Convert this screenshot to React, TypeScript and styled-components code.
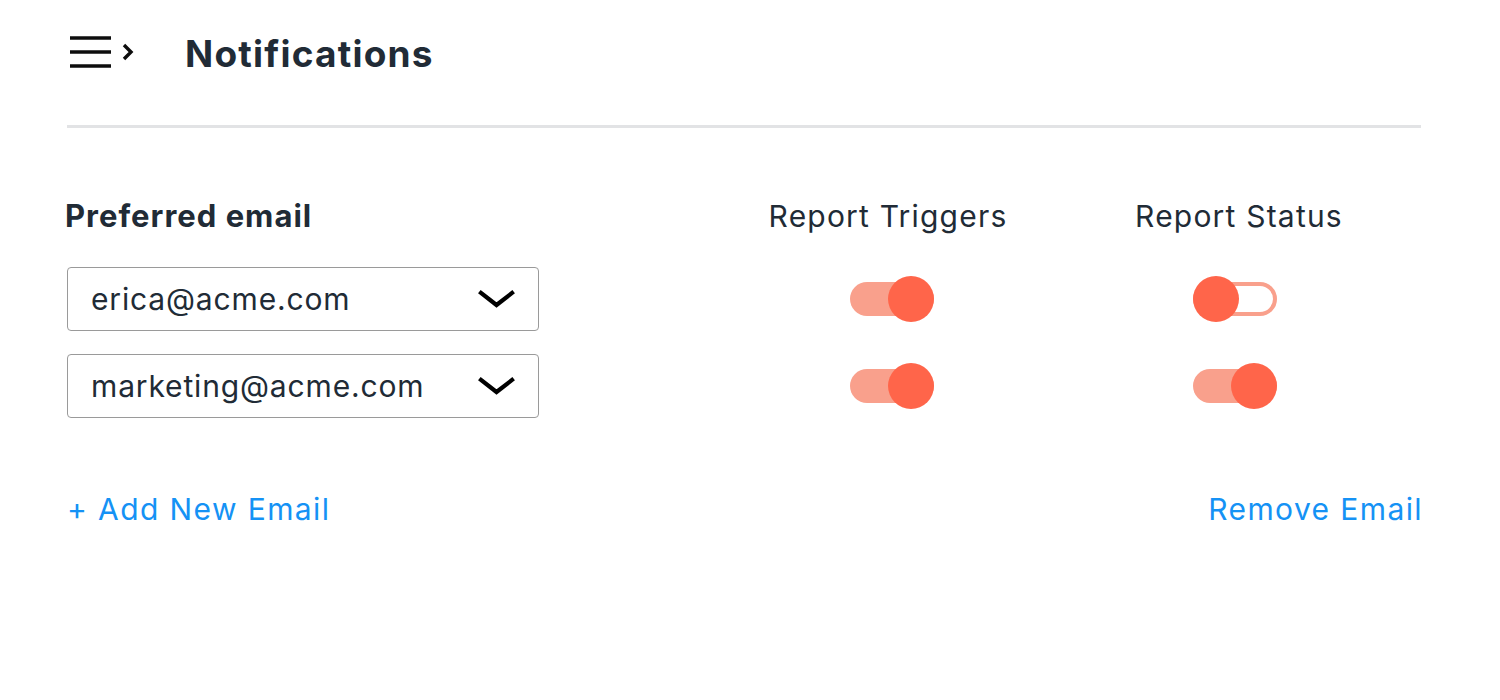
import React from "react";
import styled, { createGlobalStyle } from "styled-components";

const Global = createGlobalStyle`
  html, body { margin: 0; padding: 0; background: #fff; }
  body { font-family: Inter, "Noto Sans", sans-serif; color: #212b36; }
  * { box-sizing: border-box; }
`;

const Page = styled.div`
  width: 1500px;
  height: 700px;
  padding: 0 79px 0 67px;
`;

const Header = styled.header`
  display: flex;
  align-items: center;
  height: 128px;
  border-bottom: 3px solid #e2e3e5;
  padding-bottom: 18px;
`;

const MenuButton = styled.button`
  display: flex;
  align-items: center;
  border: 0;
  background: none;
  padding: 0;
  margin: 0 0 4px 3px;
  width: 66px;
  height: 40px;
  cursor: pointer;
`;

const Title = styled.h1`
  margin: 0 0 0 49px;
  font-size: 37px;
  font-weight: 700;
  letter-spacing: 1.2px;
  color: #212b36;
`;

const Grid = styled.div`
  display: grid;
  grid-template-columns: 620px 300px 300px;
  column-gap: 51px;
  row-gap: 23px;
  align-items: center;
  margin-top: 70px;
`;

const ColumnLabel = styled.div<{ $bold?: boolean; $center?: boolean }>`
  font-size: ${(p) => (p.$bold ? "31px" : "30px")};
  font-weight: ${(p) => (p.$bold ? 700 : 400)};
  letter-spacing: ${(p) => (p.$bold ? "1px" : "1.2px")};
  text-align: ${(p) => (p.$center ? "center" : "left")};
  margin-left: ${(p) => (p.$bold ? "-2px" : "0")};
  line-height: 36px;
  margin-bottom: 10px;
`;

const Select = styled.div`
  width: 472px;
  height: 64px;
  border: 1px solid #9a9a9a;
  border-radius: 4px;
  display: flex;
  align-items: center;
  justify-content: space-between;
  padding: 0 23px 0 23px;
  font-size: 30px;
  letter-spacing: 0.85px;
  color: #212b36;
`;

const Track = styled.button<{ $on: boolean; $shift?: number }>`
  position: relative;
  justify-self: center;
  width: 84px;
  height: 34px;
  border-radius: 17px;
  padding: 0;
  cursor: pointer;
  background: ${(p) => (p.$on ? "#f9a08c" : "#fff")};
  border: ${(p) => (p.$on ? "0" : "4px solid #f9a08c")};
  margin-left: ${(p) => (p.$shift ? p.$shift * 2 : 0)}px;
`;

const Knob = styled.span<{ $on: boolean }>`
  position: absolute;
  top: 50%;
  width: 46px;
  height: 46px;
  margin-top: -23px;
  border-radius: 50%;
  background: #ff654a;
  ${(p) => (p.$on ? "right: 0;" : "left: -4px;")}
`;

const Footer = styled.div`
  display: flex;
  justify-content: space-between;
  align-items: center;
  margin-top: 73px;
  margin-right: -2px;
`;

const LinkButton = styled.a`
  font-size: 30px;
  letter-spacing: 1.4px;
  color: #1592f5;
  text-decoration: none;
  cursor: pointer;
  line-height: 36px;
`;

const Chevron = () => (
  <svg width="37" height="19" viewBox="0 0 37 19">
    <path d="M3 3 L18.5 15 L34 3" fill="none" stroke="#000" strokeWidth="4.2" strokeLinecap="square" />
  </svg>
);

const MenuIcon = () => (
  <svg width="66" height="40" viewBox="0 0 66 40">
    <g stroke="#0d0d0d" strokeWidth="3.4">
      <line x1="0" y1="6" x2="41" y2="6" />
      <line x1="0" y1="20" x2="41" y2="20" />
      <line x1="0" y1="34" x2="41" y2="34" />
    </g>
    <path d="M54 13 L61 20 L54 27" fill="none" stroke="#0d0d0d" strokeWidth="3.4" />
  </svg>
);

const Toggle = ({ on, shift }: { on: boolean; shift?: number }) => (
  <Track $on={on} $shift={shift} aria-pressed={on}>
    <Knob $on={on} />
  </Track>
);

const rows = [
  { email: "erica@acme.com", triggers: true, status: false },
  { email: "marketing@acme.com", triggers: true, status: true },
];

export default function App() {
  return (
    <>
      <Global />
      <Page>
        <Header>
          <MenuButton aria-label="menu">
            <MenuIcon />
          </MenuButton>
          <Title>Notifications</Title>
        </Header>
        <Grid>
          <ColumnLabel $bold>Preferred email</ColumnLabel>
          <ColumnLabel $center>Report Triggers</ColumnLabel>
          <ColumnLabel $center>Report Status</ColumnLabel>
          {rows.map((r) => (
            <React.Fragment key={r.email}>
              <Select>
                <span>{r.email}</span>
                <Chevron />
              </Select>
              <Toggle on={r.triggers} shift={4} />
              <Toggle on={r.status} shift={-4} />
            </React.Fragment>
          ))}
        </Grid>
        <Footer>
          <LinkButton>+ Add New Email</LinkButton>
          <LinkButton>Remove Email</LinkButton>
        </Footer>
      </Page>
    </>
  );
}
